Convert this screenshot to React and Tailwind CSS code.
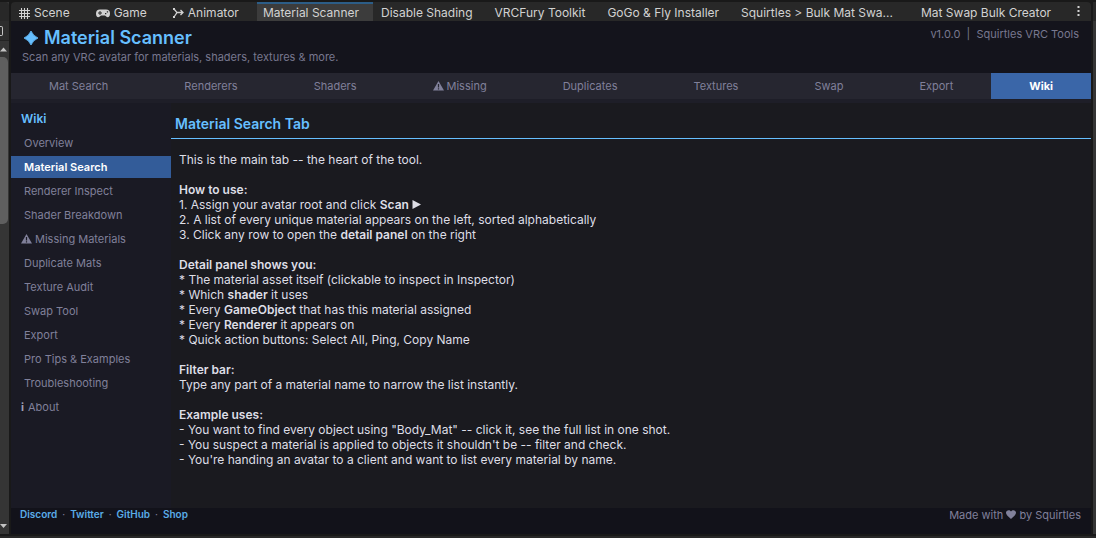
import React from "react";

const windowTabs = [
  { label: "Scene", icon: "grid", size: "pr-[18px]" },
  { label: "Game", icon: "pad", size: "pr-[18px]" },
  { label: "Animator", icon: "flow", size: "pr-4" },
  { label: "Material Scanner", active: true },
  { label: "Disable Shading" },
  { label: "VRCFury Toolkit" },
  { label: "GoGo & Fly Installer" },
  { label: "Squirtles > Bulk Mat Swa...", size: "pr-5" },
  { label: "Mat Swap Bulk Creator" },
];

const toolTabs = [
  "Mat Search",
  "Renderers",
  "Shaders",
  "Missing",
  "Duplicates",
  "Textures",
  "Swap",
  "Export",
  "Wiki",
];

const wikiPages = [
  "Overview",
  "Material Search",
  "Renderer Inspect",
  "Shader Breakdown",
  "Missing Materials",
  "Duplicate Mats",
  "Texture Audit",
  "Swap Tool",
  "Export",
  "Pro Tips & Examples",
  "Troubleshooting",
  "About",
];

function TabIcon({ name }) {
  if (name === "grid")
    return (
      <svg viewBox="0 0 11 11" className="h-[11px] w-[11px]" stroke="currentColor" strokeWidth="1.1" aria-hidden="true">
        <path d="M2.500 0v11M5.500 0v11M8.500 0v11M0 2.500h11M0 5.500h11M0 8.500h11" />
      </svg>
    );
  if (name === "pad")
    return (
      <svg viewBox="0 0 14 9" className="h-[9px] w-[14px]" aria-hidden="true">
        <path
          fill="currentColor"
          fillRule="evenodd"
          d="M4 .5h6A4 4 0 0 1 14 4.500C14 7 13 8.300 11.800 8.300 10.600 8.300 9.800 7 9 6.500H5C4.200 7 3.400 8.300 2.200 8.300 1 8.300 0 7 0 4.500A4 4 0 0 1 4 .5ZM3.500 2v1.500H2v1h1.500V6h1V4.500H6v-1H4.500V2ZM9 4v1.300h1.300V4ZM10.800 2.200v1.300h1.300V2.200Z"
        />
      </svg>
    );
  return (
    <svg viewBox="0 0 11 10" className="h-[10px] w-[11px]" fill="none" stroke="currentColor" strokeWidth="1.3" aria-hidden="true">
      <path d="M1 1 4 4.500 1 9M4 4.500h6M7.500 2 10 4.500 7.500 7" />
      <path fill="currentColor" stroke="none" d="M0 0h2v2H0zM0 8h2v2H0z" />
    </svg>
  );
}

function Warning() {
  return (
    <svg viewBox="0 0 11 10" className="mr-[3px] inline h-[10px] w-[11px] shrink-0" aria-hidden="true">
      <path fill="currentColor" fillRule="evenodd" d="M5.500 0 11 9.500H0ZM4.900 3v3.500h1.200V3ZM4.900 7.300v1.200h1.200V7.300Z" />
    </svg>
  );
}

function DockEdge() {
  return (
    <aside className="mr-0.5 flex w-[9px] shrink-0 flex-col bg-[#353535]">
      <div className="h-[19px] rounded-tr-sm bg-[#282828]" />
      <div className="flex h-5 items-center border-b border-[#232323] bg-[#2d2d2d]">
        <span className="h-2.5 w-[3px] rounded-r-xs border border-l-0 border-[#c4c4c4]" />
      </div>
      <svg viewBox="0 0 9 16" className="h-4 w-[9px] shrink-0" aria-hidden="true">
        <path fill="#c4c4c4" d="M0 10.500 3.500 6.500 7 10.500Z" />
      </svg>
      <div className="h-[167px] w-2 rounded-r-[5px] bg-[#5f5f5f]" />
      <svg viewBox="0 0 9 16" className="mt-auto h-4 w-[9px] shrink-0" aria-hidden="true">
        <path fill="#c4c4c4" d="M0 6h7L3.500 10Z" />
      </svg>
    </aside>
  );
}

function WindowTabs() {
  return (
    <div role="tablist" className="flex h-[19px] shrink-0 items-stretch overflow-hidden rounded-t-sm bg-[#282828] text-xs whitespace-nowrap text-[#d2d2d2]">
      {windowTabs.map((t) => (
        <button
          key={t.label}
          role="tab"
          aria-selected={Boolean(t.active)}
          className={
            "flex items-center gap-1 border-t-2 pt-px " +
            (t.active
              ? "ml-0.5 border-[#2c5d87] bg-[#3c3c3c] pr-3.5 pl-1.5"
              : "border-transparent pl-2 " + (t.size || "pr-3.5"))
          }
        >
          {t.icon && <TabIcon name={t.icon} />}
          {t.label}
        </button>
      ))}
      <button aria-label="Window options" className="ml-auto flex w-7 items-center justify-center">
        <svg viewBox="0 0 3 11" className="h-[11px] w-[3px]" fill="#d2d2d2" aria-hidden="true">
          <path d="M.5 0h2v2h-2zM.5 4h2v2h-2zM.5 8h2v2h-2z" />
        </svg>
      </button>
    </div>
  );
}

function Header() {
  return (
    <header className="flex h-[52px] shrink-0 justify-between bg-[#14141c] pr-3 pl-[11px] text-[11px] text-[#78788f]">
      <div>
        <h1 className="mt-[5px] flex h-6 items-center gap-1.5 pl-0.5 text-lg font-semibold text-[#66bfff]">
          <svg viewBox="0 0 14 14" className="h-3.5 w-3.5" aria-hidden="true">
            <path fill="currentColor" d="M7 0Q9 4.800 14 7 9 9.200 7 14 5 9.200 0 7 5 4.800 7 0Z" stroke="currentColor" strokeWidth=".8" strokeLinejoin="round" />
          </svg>
          Material Scanner
        </h1>
        <p className="-mt-px leading-4">Scan any VRC avatar for materials, shaders, textures &amp; more.</p>
      </div>
      <p className="mt-[5px] leading-4 whitespace-pre">v1.0.0  |  Squirtles VRC Tools</p>
    </header>
  );
}

function ToolTabs() {
  return (
    <nav className="flex h-[26px] shrink-0 bg-[#262630] text-[11px] text-[#80809a]">
      {toolTabs.map((t) => (
        <button
          key={t}
          className={
            "flex flex-auto items-center justify-center " +
            (t === "Wiki" ? "bg-[#3a66a8] font-bold text-white" : "")
          }
        >
          {t === "Missing" && <Warning />}
          {t}
        </button>
      ))}
    </nav>
  );
}

function Sidebar() {
  return (
    <nav className="flex w-40 shrink-0 flex-col bg-[#1a1a24] text-[11px] text-[#80809a]">
      <h2 className="h-7 pt-2 pl-2.5 text-xs leading-4 font-semibold text-[#66bfff]">Wiki</h2>
      {wikiPages.map((p) => {
        const marked = p === "Missing Materials" || p === "About";
        return (
          <button
            key={p}
            className={
              "my-px flex h-[22px] w-full items-center " +
              (marked ? "pl-2.5 " : "pl-[13px] ") +
              (p === "Material Search" ? "bg-[#335c99] font-semibold text-white" : "")
            }
          >
            {p === "Missing Materials" && <Warning />}
            {p === "About" && <b className="mr-1 text-[#a0a0b4]">i</b>}
            {p}
          </button>
        );
      })}
    </nav>
  );
}

function Article() {
  return (
    <main className="min-w-0 flex-1 bg-[#1a1a1f] text-xs text-[#dedee6]">
      <h2 className="flex h-9 items-center border-b border-[#66bfff] pt-1.5 pl-1 text-sm font-semibold text-[#66bfff]">
        Material Search Tab
      </h2>
      <div className="flex flex-col gap-[15px] pt-[13px] pl-2 leading-[15px]">
        <p>This is the main tab -- the heart of the tool.</p>
        <section>
          <h3 className="font-semibold">How to use:</h3>
          <p>
            1. Assign your avatar root and click <b className="font-semibold">Scan</b>{" "}
            <svg viewBox="0 0 9 9" className="inline h-[9px] w-[9px] align-baseline" aria-hidden="true">
              <path fill="currentColor" d="M.5 0 9 4.500.5 9Z" />
            </svg>
          </p>
          <p>2. A list of every unique material appears on the left, sorted alphabetically</p>
          <p>
            3. Click any row to open the <b className="font-semibold">detail panel</b> on the right
          </p>
        </section>
        <section>
          <h3 className="font-semibold">Detail panel shows you:</h3>
          <p>* The material asset itself (clickable to inspect in Inspector)</p>
          <p>
            * Which <b className="font-semibold">shader</b> it uses
          </p>
          <p>
            * Every <b className="font-semibold">GameObject</b> that has this material assigned
          </p>
          <p>
            * Every <b className="font-semibold">Renderer</b> it appears on
          </p>
          <p>* Quick action buttons: Select All, Ping, Copy Name</p>
        </section>
        <section>
          <h3 className="font-semibold">Filter bar:</h3>
          <p>Type any part of a material name to narrow the list instantly.</p>
        </section>
        <section>
          <h3 className="font-semibold">Example uses:</h3>
          <p>- You want to find every object using "Body_Mat" -- click it, see the full list in one shot.</p>
          <p>- You suspect a material is applied to objects it shouldn't be -- filter and check.</p>
          <p>- You're handing an avatar to a client and want to list every material by name.</p>
        </section>
      </div>
    </main>
  );
}

function Footer() {
  return (
    <footer className="flex h-[26px] shrink-0 justify-between bg-[#12121a] pr-2.5 pl-[9px] text-[11px] leading-[15px] text-[#80809a]">
      <div className="flex text-[10px] leading-[13px]">
        {["Discord", "Twitter", "GitHub", "Shop"].map((l, i) => (
          <span key={l}>
            {i > 0 && <span className="px-[5px]">·</span>}
            <a href="#" className="font-semibold text-[#5aace8]">
              {l}
            </a>
          </span>
        ))}
      </div>
      <p>
        Made with{" "}
        <svg viewBox="0 0 10 9" className="inline h-[9px] w-[10px] align-baseline" aria-hidden="true">
          <path fill="currentColor" d="M5 9C3 7 0 5.200 0 2.600 0 .2 3.500-.9 5 1.500 6.500-.9 10 .2 10 2.600 10 5.200 7 7 5 9Z" />
        </svg>{" "}
        by Squirtles
      </p>
    </footer>
  );
}

export default function App() {
  return (
    <div className="flex min-h-screen flex-col bg-[#191919] pt-0.5 font-[Inter,sans-serif]">
      <div className="flex flex-1">
        <DockEdge />
        <div className="flex min-w-0 flex-1 flex-col">
          <WindowTabs />
          <Header />
          <ToolTabs />
          <div className="h-1 bg-[#1e1e28]" />
          <div className="flex flex-1">
            <Sidebar />
            <Article />
          </div>
          <Footer />
        </div>
        <div className="ml-0.5 w-[3px] shrink-0 bg-[#353535]">
          <div className="h-[19px] bg-[#282828]" />
        </div>
      </div>
      <div className="mt-0.5 h-0.5 shrink-0 bg-[#282828]" />
    </div>
  );
}
